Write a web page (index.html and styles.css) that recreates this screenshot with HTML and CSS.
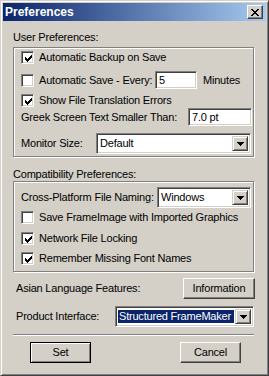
FILE: index.html
```html
<!DOCTYPE html>
<html>
<head>
<meta charset="utf-8">
<title>Preferences</title>
<link rel="stylesheet" href="styles.css">
</head>
<body>
<div class="window">
  <div class="titlebar">
    <span class="title">Preferences</span>
    <span class="close-btn"><svg width="8" height="7" viewBox="0 0 8 7"><path d="M0 0h2v1h-2z M6 0h2v1h-2z M1 1h2v1h-2z M5 1h2v1h-2z M2 2h4v1h-4z M3 3h2v1h-2z M2 4h4v1h-4z M1 5h2v1h-2z M5 5h2v1h-2z M0 6h2v1h-2z M6 6h2v1h-2z" fill="#000"/></svg></span>
  </div>
  <div class="content">
    <div class="group-label">User Preferences:</div>
    <div class="group group-user">
      <div class="row row-backup">
        <span class="checkbox"><svg width="9" height="9" viewBox="0 0 9 9"><path d="M1 3h1v3h-1z M2 4h1v3h-1z M3 5h1v3h-1z M4 4h1v3h-1z M5 3h1v3h-1z M6 2h1v3h-1z M7 1h1v3h-1z" fill="#000"/></svg></span>
        <span class="check-label">Automatic Backup on Save</span>
      </div>
      <div class="row row-autosave">
        <span class="checkbox"></span>
        <span class="check-label autosave-label">Automatic Save - Every:</span>
        <span class="textbox autosave-box">5</span>
        <span class="unit">Minutes</span>
      </div>
      <div class="row row-errors">
        <span class="checkbox"><svg width="9" height="9" viewBox="0 0 9 9"><path d="M1 3h1v3h-1z M2 4h1v3h-1z M3 5h1v3h-1z M4 4h1v3h-1z M5 3h1v3h-1z M6 2h1v3h-1z M7 1h1v3h-1z" fill="#000"/></svg></span>
        <span class="check-label">Show File Translation Errors</span>
      </div>
      <div class="row row-greek">
        <span class="field-label greek-label">Greek Screen Text Smaller Than:</span>
        <span class="textbox greek-box">7.0 pt</span>
      </div>
      <div class="row row-monitor">
        <span class="field-label monitor-label">Monitor Size:</span>
        <span class="combo monitor-combo"><span class="combo-value">Default</span><span class="combo-btn"><svg width="7" height="4" viewBox="0 0 7 4"><path d="M0 0h7v1h-7z M1 1h5v1h-5z M2 2h3v1h-3z M3 3h1v1h-1z" fill="#000"/></svg></span></span>
      </div>
    </div>

    <div class="group-label compat-label">Compatibility Preferences:</div>
    <div class="group group-compat">
      <div class="row row-naming">
        <span class="field-label naming-label">Cross-Platform File Naming:</span>
        <span class="combo naming-combo"><span class="combo-value">Windows</span><span class="combo-btn"><svg width="7" height="4" viewBox="0 0 7 4"><path d="M0 0h7v1h-7z M1 1h5v1h-5z M2 2h3v1h-3z M3 3h1v1h-1z" fill="#000"/></svg></span></span>
      </div>
      <div class="row row-frameimage">
        <span class="checkbox"></span>
        <span class="check-label">Save FrameImage with Imported Graphics</span>
      </div>
      <div class="row row-locking">
        <span class="checkbox"><svg width="9" height="9" viewBox="0 0 9 9"><path d="M1 3h1v3h-1z M2 4h1v3h-1z M3 5h1v3h-1z M4 4h1v3h-1z M5 3h1v3h-1z M6 2h1v3h-1z M7 1h1v3h-1z" fill="#000"/></svg></span>
        <span class="check-label">Network File Locking</span>
      </div>
      <div class="row row-fonts">
        <span class="checkbox"><svg width="9" height="9" viewBox="0 0 9 9"><path d="M1 3h1v3h-1z M2 4h1v3h-1z M3 5h1v3h-1z M4 4h1v3h-1z M5 3h1v3h-1z M6 2h1v3h-1z M7 1h1v3h-1z" fill="#000"/></svg></span>
        <span class="check-label">Remember Missing Font Names</span>
      </div>
    </div>

    <div class="row row-asian">
      <span class="field-label asian-label">Asian Language Features:</span>
      <span class="push-btn info-btn">Information</span>
    </div>
    <div class="row row-product">
      <span class="field-label product-label">Product Interface:</span>
      <span class="combo product-combo"><span class="combo-value is-selected">Structured FrameMaker</span><span class="combo-btn"><svg width="7" height="4" viewBox="0 0 7 4"><path d="M0 0h7v1h-7z M1 1h5v1h-5z M2 2h3v1h-3z M3 3h1v1h-1z" fill="#000"/></svg></span></span>
    </div>
    <div class="separator"></div>
    <div class="row row-buttons">
      <span class="push-btn default-btn">Set</span>
      <span class="push-btn cancel-btn">Cancel</span>
    </div>
  </div>
</div>
</body>
</html>
```

FILE: styles.css
```css
* { box-sizing: border-box; }

html, body {
  margin: 0;
  padding: 0;
  background: #d4d0c8;
}

body {
  font-family: "Liberation Sans", Arial, sans-serif;
  font-size: 11px;
  line-height: 13px;
  letter-spacing: -0.2px;
  color: #000;
}

.window {
  width: 269px;
  height: 376px;
  background: #d4d0c8;
  border: 1px solid;
  border-color: #d4d0c8 #404040 #404040 #d4d0c8;
  box-shadow: inset 1px 1px #fff, inset -1px -1px #808080;
  padding: 2px;
}

.titlebar {
  height: 18px;
  display: flex;
  align-items: center;
  padding-left: 2px;
  padding-right: 3px;
  background: linear-gradient(to right, #0a246a, #a6caf0);
}

.title {
  color: #fff;
  font-weight: bold;
  font-size: 12px;
  letter-spacing: 0;
}

.close-btn {
  margin-left: auto;
  width: 16px;
  height: 14px;
  display: flex;
  align-items: center;
  justify-content: center;
  background: #d4d0c8;
  border: 1px solid;
  border-color: #fff #404040 #404040 #fff;
  box-shadow: inset -1px -1px #808080;
}

.close-btn svg { display: block; }

.content {
  display: flex;
  flex-direction: column;
}

.group-label {
  margin: 10px 0 3px 10px;
  height: 13px;
}

.compat-label {
  margin-top: 11px;
  margin-bottom: 0;
}

.group {
  margin-left: 10px;
  width: 241px;
  border: 1px solid #808080;
  box-shadow: inset 1px 1px #fff, 1px 1px #fff;
  display: flex;
  flex-direction: column;
  padding-left: 7px;
}

.group-user { padding-top: 3px; padding-bottom: 2px; }
.group-compat { padding-top: 5px; padding-bottom: 6px; }

.row {
  display: flex;
  align-items: center;
}

.checkbox {
  width: 13px;
  height: 13px;
  flex: none;
  padding: 2px;
  background: #fff;
  border: 1px solid;
  border-color: #808080 #fff #fff #808080;
  box-shadow: inset 1px 1px #404040, inset -1px -1px #d4d0c8;
}

.checkbox svg { display: block; }

.check-label { margin-left: 5px; white-space: nowrap; }

.field-label { flex: none; white-space: nowrap; }

.textbox {
  height: 18px;
  flex: none;
  display: flex;
  align-items: center;
  padding-left: 3px;
  background: #fff;
  border: 1px solid;
  border-color: #808080 #fff #fff #808080;
  box-shadow: inset 1px 1px #404040, inset -1px -1px #d4d0c8;
}

.combo {
  height: 21px;
  flex: none;
  display: flex;
  background: #fff;
  border: 1px solid;
  border-color: #808080 #fff #fff #808080;
  box-shadow: inset 1px 1px #404040, inset -1px -1px #d4d0c8;
  padding: 2px;
}

.combo-value {
  flex: 1;
  display: flex;
  align-items: center;
  padding-left: 1px;
  white-space: nowrap;
  overflow: hidden;
}

.combo-value.is-selected {
  margin: 1px 1px 1px 0;
  background: #0a246a;
  color: #fff;
}

.combo-btn {
  width: 16px;
  flex: none;
  display: flex;
  align-items: center;
  justify-content: center;
  background: #d4d0c8;
  border: 1px solid;
  border-color: #d4d0c8 #404040 #404040 #d4d0c8;
  box-shadow: inset 1px 1px #fff, inset -1px -1px #808080;
}

.combo-btn svg { display: block; }

.row-backup { height: 13px; }
.row-autosave { height: 18px; margin-top: 7px; }
.row-errors { height: 13px; margin-top: 5px; }
.row-greek { height: 18px; margin-top: 1px; }
.row-monitor { height: 21px; margin-top: 7px; }

.autosave-label { width: 116px; }
.autosave-box { width: 42px; }
.unit { margin-left: 6px; }

.greek-label { width: 167px; }
.greek-box { width: 64px; }

.monitor-label { width: 75px; }
.monitor-combo { width: 155px; }

.row-naming { height: 21px; }
.row-frameimage { height: 13px; margin-top: 3px; }
.row-locking { height: 13px; margin-top: 8px; }
.row-fonts { height: 13px; margin-top: 7px; }

.naming-label { width: 136px; }
.naming-combo { width: 94px; }

.row-asian {
  height: 21px;
  margin-top: 6px;
  padding-left: 13px;
}

.asian-label { width: 167px; }

.row-product {
  height: 21px;
  margin-top: 7px;
  padding-left: 13px;
}

.product-label { width: 99px; }
.product-combo { width: 139px; }

.separator {
  margin: 7px 0 0 10px;
  width: 241px;
  height: 2px;
  border-top: 1px solid #808080;
  border-bottom: 1px solid #fff;
}

.row-buttons {
  height: 21px;
  margin-top: 6px;
  padding-left: 27px;
}

.push-btn {
  height: 21px;
  flex: none;
  display: flex;
  align-items: center;
  justify-content: center;
  background: #d4d0c8;
  border: 1px solid;
  border-color: #fff #404040 #404040 #fff;
  box-shadow: inset -1px -1px #808080;
}

.info-btn { width: 72px; }

.default-btn {
  width: 61px;
  border-color: #000;
  box-shadow: inset 1px 1px #fff, inset -1px -1px #808080;
}

.cancel-btn {
  width: 61px;
  margin-left: 89px;
}
```
